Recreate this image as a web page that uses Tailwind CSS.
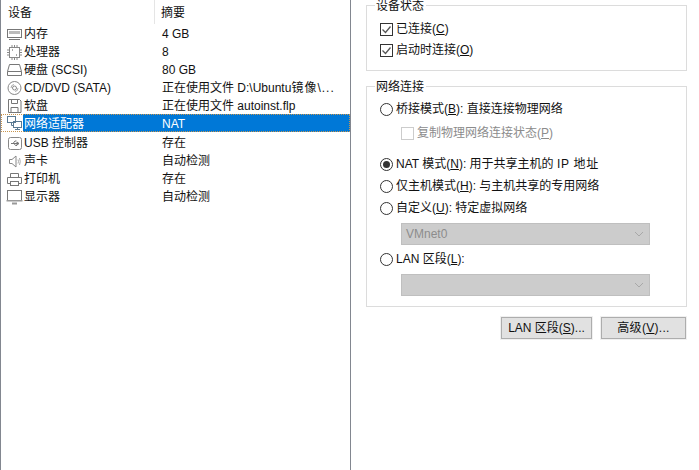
<!DOCTYPE html>
<html lang="zh-CN">
<head>
    <meta charset="UTF-8">
    <script src="https://cdn.jsdelivr.net/npm/@tailwindcss/browser@4"></script>
    <title>虚拟机设置</title>
</head>
<body class="bg-white text-[#111] text-[12px] leading-[18px] font-['Liberation_Sans','Noto_Sans_CJK_SC',sans-serif]">
<div class="flex w-[699px] h-[470px] overflow-hidden">
    <!-- device list -->
    <div class="w-[351px] h-full shrink-0 border-l border-r border-[#828790]">
        <div class="flex h-[24px] items-center">
            <div class="w-[154px] h-full pl-[7px] pt-[2px] flex items-center border-r border-[#e5e5e5]">设备</div>
            <div class="pl-[6px] pt-[2px]">摘要</div>
        </div>
        <div class="flex h-[18px] pt-[2px] items-center">
            <div class="w-[155px] flex items-center gap-[1px] pl-[5px]">
                <svg width="17" height="14" viewBox="0 0 17 14" fill="none" stroke="#777"><rect x="1.5" y="2.5" width="14" height="8"/><rect x="3" y="4" width="11" height="3" fill="#bbb" stroke="none"/><path d="M3 12.5h11"/></svg>
                <span>内存</span>
            </div>
            <div class="pl-[6px]">4 GB</div>
        </div>
        <div class="flex h-[18px] pt-[2px] items-center">
            <div class="w-[155px] flex items-center gap-[1px] pl-[5px]">
                <svg width="17" height="16" viewBox="0 0 17 16" fill="none" stroke="#888"><rect x="3.5" y="3.5" width="10" height="10"/><path d="M6 1v2M8.500 1v2M11 1v2M6 14v2M8.500 14v2M11 14v2M1 6h2M1 8.500h2M1 11h2M14 6h2M14 8.500h2M14 11h2" /><path d="M6 6h1M10 11h1" stroke="#555"/></svg>
                <span>处理器</span>
            </div>
            <div class="pl-[6px]">8</div>
        </div>
        <div class="flex h-[18px] pt-[2px] items-center">
            <div class="w-[155px] flex items-center gap-[1px] pl-[5px]">
                <svg width="17" height="14" viewBox="0 0 17 14" fill="none" stroke="#777"><path d="M3.500 1.500h10l2 7v4h-14v-4z"/><path d="M1.500 8.500h14"/></svg>
                <span>硬盘 (SCSI)</span>
            </div>
            <div class="pl-[6px]">80 GB</div>
        </div>
        <div class="flex h-[18px] pt-[2px] items-center">
            <div class="w-[155px] flex items-center gap-[1px] pl-[5px]">
                <svg width="17" height="16" viewBox="0 0 17 16" fill="none" stroke="#888"><circle cx="8.500" cy="8" r="6.500"/><circle cx="8.500" cy="8" r="2"/><path d="M5 8a3.500 3.500 0 0 1 3-3.500M12 8a3.500 3.500 0 0 1-3 3.500" stroke="#aaa"/></svg>
                <span>CD/DVD (SATA)</span>
            </div>
            <div class="pl-[6px]">正在使用文件 D:\Ubuntu<span class="tracking-[1px]">镜像\...</span></div>
        </div>
        <div class="flex h-[18px] pt-[2px] items-center">
            <div class="w-[155px] flex items-center gap-[1px] pl-[5px]">
                <svg width="17" height="16" viewBox="0 0 17 16" fill="none" stroke="#777"><path d="M2.500 1.500h11l1.500 1.500v11.500h-12.500z"/><path d="M5.500 1.500v4h6v-4M5 14.500v-5h7v5"/></svg>
                <span>软盘</span>
            </div>
            <div class="pl-[6px]">正在使用文件 autoinst.flp</div>
        </div>
        <div class="flex h-[18px] items-center bg-[#0078d7] text-white outline-1 outline-dotted -outline-offset-1 outline-[#c9964f]">
            <div class="w-[155px] flex items-center">
                <div class="w-[22px] h-[18px] bg-white flex items-center pl-[6px] shrink-0">
                    <svg width="16" height="15" viewBox="0 0 16 15" fill="none" stroke="#5b7a92"><rect x="0.500" y="0.500" width="8" height="6"/><rect x="6.500" y="5.500" width="8" height="6"/><path d="M10.500 11.500v2M8 13.500h5M4.500 6.500v3h2"/></svg>
                </div>
                <span class="pl-[1px] pt-[2px]">网络适配器</span>
            </div>
            <div class="pl-[6px] pt-[2px]">NAT</div>
        </div>
        <div class="flex h-[18px] pt-[2px] items-center mt-[1px]">
            <div class="w-[155px] flex items-center gap-[1px] pl-[5px]">
                <svg width="17" height="15" viewBox="0 0 17 15" fill="none" stroke="#888"><rect x="2.500" y="1.500" width="13" height="12" rx="2"/><path d="M5 7.500h8M13 7.500l-2-1.500v3zM7 7.500l2-2.500h1.500M8 7.500l1.500 2h1.500" stroke="#777"/></svg>
                <span>USB 控制器</span>
            </div>
            <div class="pl-[6px]">存在</div>
        </div>
        <div class="flex h-[18px] pt-[2px] items-center">
            <div class="w-[155px] flex items-center gap-[1px] pl-[5px]">
                <svg width="17" height="15" viewBox="0 0 17 15" fill="none" stroke="#888"><path d="M3.500 5.500h2.500l4-3.500v11l-4-3.500h-2.500z"/><path d="M12 5.500q1 2 0 4M13.500 4q1.500 3.500 0 7" stroke="#aaa"/></svg>
                <span>声卡</span>
            </div>
            <div class="pl-[6px]">自动检测</div>
        </div>
        <div class="flex h-[18px] pt-[2px] items-center">
            <div class="w-[155px] flex items-center gap-[1px] pl-[5px]">
                <svg width="17" height="15" viewBox="0 0 17 15" fill="none" stroke="#777"><path d="M4.500 5.500v-4h8v4M4.500 11.500h-3v-6h14v6h-3"/><rect x="4.500" y="9.500" width="8" height="4"/></svg>
                <span>打印机</span>
            </div>
            <div class="pl-[6px]">存在</div>
        </div>
        <div class="flex h-[18px] pt-[2px] items-center">
            <div class="w-[155px] flex items-center gap-[1px] pl-[5px]">
                <svg width="17" height="15" viewBox="0 0 17 15" fill="none" stroke="#777"><rect x="1.500" y="0.500" width="14" height="10" fill="#fff"/><rect x="0.500" y="10" width="16" height="1.500" fill="#999" stroke="none"/><path d="M6 13.500h5" stroke="#999" stroke-width="2"/></svg>
                <span>显示器</span>
            </div>
            <div class="pl-[6px]">自动检测</div>
        </div>
    </div>

    <!-- settings -->
    <div class="w-[321px] ml-[15px] shrink-0">
        <div class="relative mt-[5px] h-[66px] border border-[#dcdcdc] px-[12px] pt-[14px]">
            <span class="absolute left-[8px] -top-[9px] bg-white px-[1px] pr-[2px]">设备状态</span>
            <label class="flex items-center h-[18px] gap-[3px] pl-[1px]">
                <svg width="13" height="13" viewBox="0 0 13 13" fill="none"><rect x="0.500" y="0.500" width="12" height="12" stroke="#333"/><path d="M2.500 6.500l3 3 5-6" stroke="#555" stroke-width="1.300"/></svg>
                <span>已连接(<u>C</u>)</span>
            </label>
            <label class="flex items-center h-[18px] gap-[3px] pl-[1px] mt-[3px]">
                <svg width="13" height="13" viewBox="0 0 13 13" fill="none"><rect x="0.500" y="0.500" width="12" height="12" stroke="#333"/><path d="M2.500 6.500l3 3 5-6" stroke="#555" stroke-width="1.300"/></svg>
                <span>启动时连接(<u>O</u>)</span>
            </label>
        </div>

        <div class="relative mt-[15px] h-[221px] border border-[#dcdcdc] px-[12px] pt-[13px]">
            <span class="absolute left-[8px] -top-[9px] bg-white px-[1px] pr-[2px]">网络连接</span>
            <label class="flex items-center h-[18px] gap-[3px] pl-[1px]">
                <span class="w-[13px] h-[13px] rounded-full border border-[#333]"></span>
                <span>桥接模式(<u>B</u>): 直接连接物理网络</span>
            </label>
            <label class="flex items-center h-[18px] gap-[3px] pl-[22px] mt-[6px] text-[#8c8c8c]">
                <span class="w-[13px] h-[13px] border border-[#ccc]"></span>
                <span>复制物理网络连接状态(<u>P</u>)</span>
            </label>
            <label class="flex items-center h-[18px] gap-[3px] pl-[1px] mt-[13px]">
                <span class="w-[13px] h-[13px] rounded-full border border-[#333] flex items-center justify-center"><span class="w-[7px] h-[7px] rounded-full bg-[#333]"></span></span>
                <span>NAT 模式(<u>N</u>): 用于共享主机的 <span class="tracking-[0.7px]">IP 地址</span></span>
            </label>
            <label class="flex items-center h-[18px] gap-[3px] pl-[1px] mt-[4px]">
                <span class="w-[13px] h-[13px] rounded-full border border-[#333]"></span>
                <span>仅主机模式(<u>H</u>): 与主机共享的专用网络</span>
            </label>
            <label class="flex items-center h-[18px] gap-[3px] pl-[1px] mt-[4px]">
                <span class="w-[13px] h-[13px] rounded-full border border-[#333]"></span>
                <span>自定义(<u>U</u>): 特定虚拟网络</span>
            </label>
            <div class="ml-[22px] mt-[6px] w-[249px] h-[22px] bg-[#cccccc] border border-[#bfbfbf] text-[#8c8c8c] flex items-center justify-between pl-[4px] pr-[5px]">
                <span>VMnet0</span>
                <svg width="10" height="6" viewBox="0 0 10 6" fill="none" stroke="#a8a8a8"><path d="M1 1l4 4 4-4"/></svg>
            </div>
            <label class="flex items-center h-[18px] gap-[3px] pl-[1px] mt-[5px]">
                <span class="w-[13px] h-[13px] rounded-full border border-[#333]"></span>
                <span>LAN 区段(<u>L</u>):</span>
            </label>
            <div class="ml-[22px] mt-[6px] w-[249px] h-[22px] bg-[#cccccc] border border-[#bfbfbf] flex items-center justify-end pr-[5px]">
                <svg width="10" height="6" viewBox="0 0 10 6" fill="none" stroke="#a8a8a8"><path d="M1 1l4 4 4-4"/></svg>
            </div>
        </div>

        <div class="flex justify-end gap-[9px] mt-[10px] pr-[1px]">
            <button class="w-[91px] h-[22px] bg-[#e1e1e1] border border-[#adadad] outline outline-[#f0f0f0]">LAN 区段(<u>S</u>)...</button>
            <button class="w-[85px] h-[22px] bg-[#e1e1e1] border border-[#adadad] outline outline-[#f0f0f0] tracking-[0.3px]">高级(<u>V</u>)...</button>
        </div>
    </div>
</div>
</body>
</html>
